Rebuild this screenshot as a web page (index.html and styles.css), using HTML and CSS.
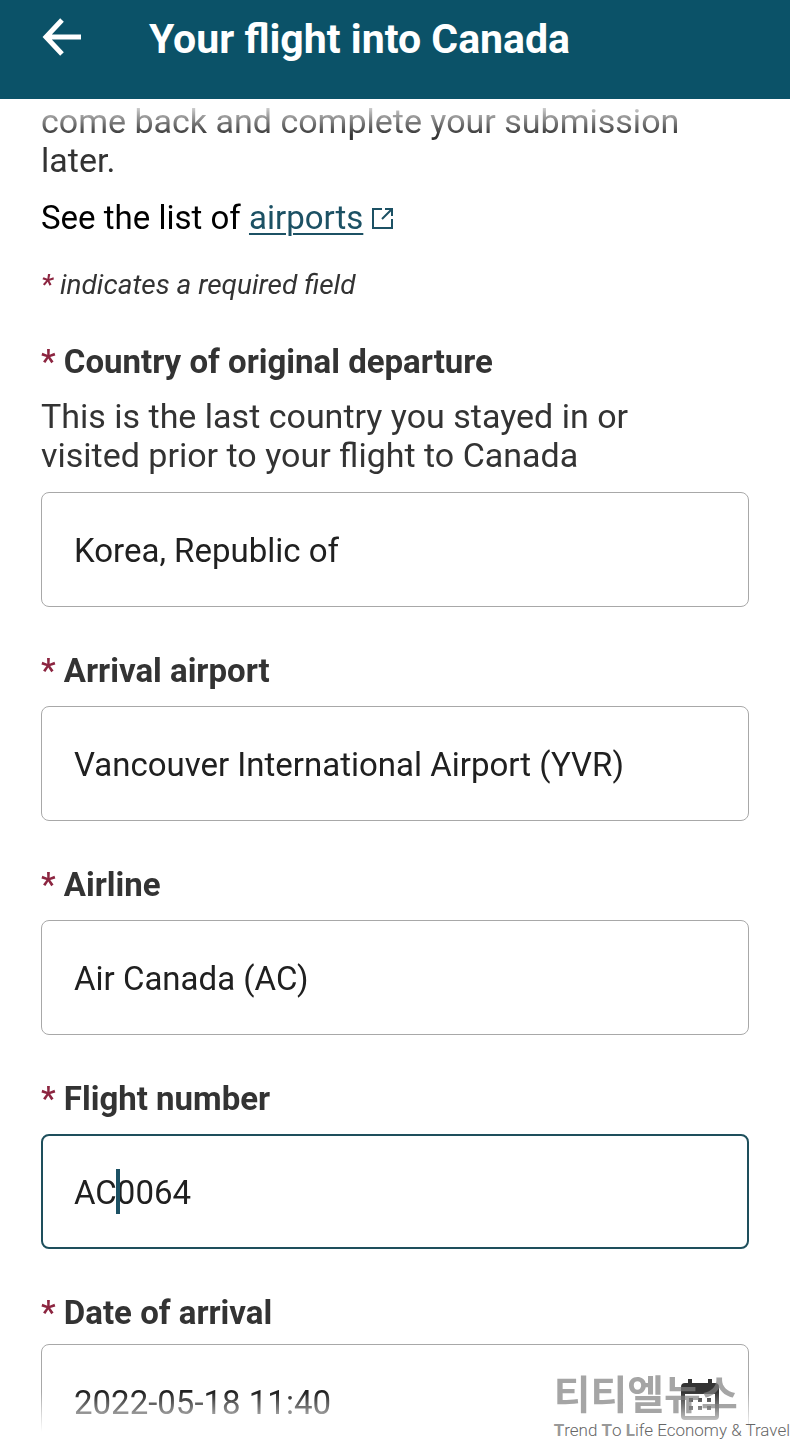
FILE: index.html
```html
<!DOCTYPE html>
<html lang="en">
<head>
    <meta charset="UTF-8">
    <meta name="viewport" content="width=device-width, initial-scale=1.0">
    <title>Your flight into Canada</title>
    <link rel="stylesheet" href="styles.css">
</head>
<body>
    <header class="top-bar">
        <button type="button" class="back-button" aria-label="Back">
            <svg width="42" height="42" viewBox="0 0 42 42" fill="none" stroke="currentColor" stroke-width="5">
                <path d="M21 2 L5 19 L21 36 M5 19 H40"/>
            </svg>
        </button>
        <h1>Your flight into Canada</h1>
    </header>

    <main class="content">
        <p class="intro">come back and complete your submission<br>later.</p>
        <p class="airports">See the list of
            <a href="#airports">airports</a>
            <svg class="external" width="22" height="22" viewBox="0 0 22 22" fill="none" stroke="currentColor" stroke-width="2">
                <path d="M10 2 H1 V21 H20 V12 M13 2 H20 V9 M20 2 L10 12"/>
            </svg>
        </p>
        <p class="note"><span class="star">*</span> indicates a required field</p>

        <form class="flight-form">
            <div class="field">
                <label for="country"><span class="star">*</span> Country of original departure</label>
                <p class="hint" id="countryHint">This is the last country you stayed in or<br>visited prior to your flight to Canada</p>
                <input type="text" id="country" value="Korea, Republic of" aria-describedby="countryHint" required>
            </div>
            <div class="field">
                <label for="airport"><span class="star">*</span> Arrival airport</label>
                <input type="text" id="airport" value="Vancouver International Airport (YVR)" required>
            </div>
            <div class="field">
                <label for="airline"><span class="star">*</span> Airline</label>
                <input type="text" id="airline" value="Air Canada (AC)" required>
            </div>
            <div class="field">
                <label for="flightNumber"><span class="star">*</span> Flight number</label>
                <div class="input-wrap">
                    <input type="text" id="flightNumber" class="active" value="AC0064" required>
                    <span class="caret"></span>
                </div>
            </div>
            <div class="field date-field">
                <label for="arrivalDate"><span class="star">*</span> Date of arrival</label>
                <div class="input-wrap">
                    <input type="text" id="arrivalDate" value="2022-05-18 11:40" required>
                    <button type="button" class="calendar-button" aria-label="Choose date">
                        <svg width="38" height="42" viewBox="0 0 38 42" fill="currentColor">
                            <path fill-rule="evenodd" d="M7 0 H11 V4 H27 V0 H31 V4 H34 Q38 4 38 8 V37 Q38 41 34 41 H4 Q0 41 0 37 V8 Q0 4 4 4 H7 Z M4 15 V37 H34 V15 Z"/>
                            <path d="M8 19 H12 V23 H8 Z M17 19 H21 V23 H17 Z M26 19 H30 V23 H26 Z M8 27 H12 V31 H8 Z M17 27 H21 V31 H17 Z M26 27 H30 V31 H26 Z"/>
                        </svg>
                    </button>
                </div>
            </div>
        </form>
    </main>

    <div class="watermark">
        <div class="watermark-name" lang="ko">티티엘뉴스</div>
        <div class="watermark-line"><b>T</b>rend <b>T</b>o <b>L</b>ife Economy &amp; Travel</div>
    </div>
</body>
</html>
```

FILE: styles.css
```css
* {
    box-sizing: border-box;
}
body {
    margin: 0;
    height: 100vh;
    display: flex;
    flex-direction: column;
    overflow: hidden;
    position: relative;
    background: #fff;
    color: #333;
    font-family: Roboto, "Noto Sans CJK KR", sans-serif;
    font-size: 33px;
    line-height: 39px;
}
h1, p {
    margin: 0;
}
button {
    padding: 0;
    border: 0;
    background: none;
}
.top-bar {
    flex: none;
    display: flex;
    align-items: center;
    gap: 66px;
    padding: 15px 41px 36px;
    background: #0b5268;
    color: #fff;
}
.top-bar h1 {
    font-size: 41px;
    line-height: 48px;
    font-weight: 700;
}
.back-button {
    width: 42px;
    height: 42px;
    color: #fff;
}
.back-button svg,
.calendar-button svg {
    display: block;
}
.content {
    flex: 1;
    min-height: 0;
    overflow: hidden;
    padding: 3px 41px 0;
    -webkit-mask-image: linear-gradient(transparent, #000 36px, #000 calc(100% - 48px), transparent calc(100% - 8px));
    mask-image: linear-gradient(transparent, #000 36px, #000 calc(100% - 48px), transparent calc(100% - 8px));
}
.intro,
.hint {
    font-size: 34px;
}
.airports {
    margin-top: 18px;
    color: #000;
}
.airports a {
    color: #1c5164;
    text-decoration-thickness: 2px;
    text-underline-offset: 4px;
}
.external {
    color: #1c5164;
}
.note {
    margin-top: 31px;
    font-size: 28px;
    line-height: 33px;
    font-style: italic;
}
.star {
    color: #8c2540;
    font-weight: 500;
}
.flight-form {
    display: flex;
    flex-direction: column;
    gap: 44px;
    margin-top: 41px;
}
.field label {
    display: block;
    margin-bottom: 16px;
    font-weight: 700;
}
.date-field label {
    margin-bottom: 12px;
}
.field .hint {
    margin-bottom: 17px;
}
.field input {
    display: block;
    width: 100%;
    height: 115px;
    padding: 2px 32px 0;
    border: 1px solid #a8a8a8;
    border-radius: 8px;
    background: #fff;
    color: #202020;
    font: inherit;
    outline: none;
}
.field input.active {
    padding: 2px 31px 0;
    border: 2px solid #1e4f5c;
}
.input-wrap {
    position: relative;
}
.caret {
    position: absolute;
    left: 75px;
    top: 35px;
    width: 4px;
    height: 45px;
    background: #1c5164;
}
.calendar-button {
    position: absolute;
    right: 30px;
    top: 35px;
    color: #333;
}
.watermark {
    position: absolute;
    right: 0;
    bottom: 0;
    color: #666;
    pointer-events: none;
    white-space: nowrap;
}
.watermark-name {
    margin-bottom: 4px;
    font-family: "Noto Sans CJK KR", sans-serif;
    font-size: 40px;
    line-height: 48px;
    font-weight: 700;
    color: #808080;
    opacity: 0.7;
}
.watermark-line {
    font-size: 17px;
    line-height: 20px;
    font-weight: 300;
}
.watermark-line b {
    color: #999;
    font-weight: 700;
}
```
